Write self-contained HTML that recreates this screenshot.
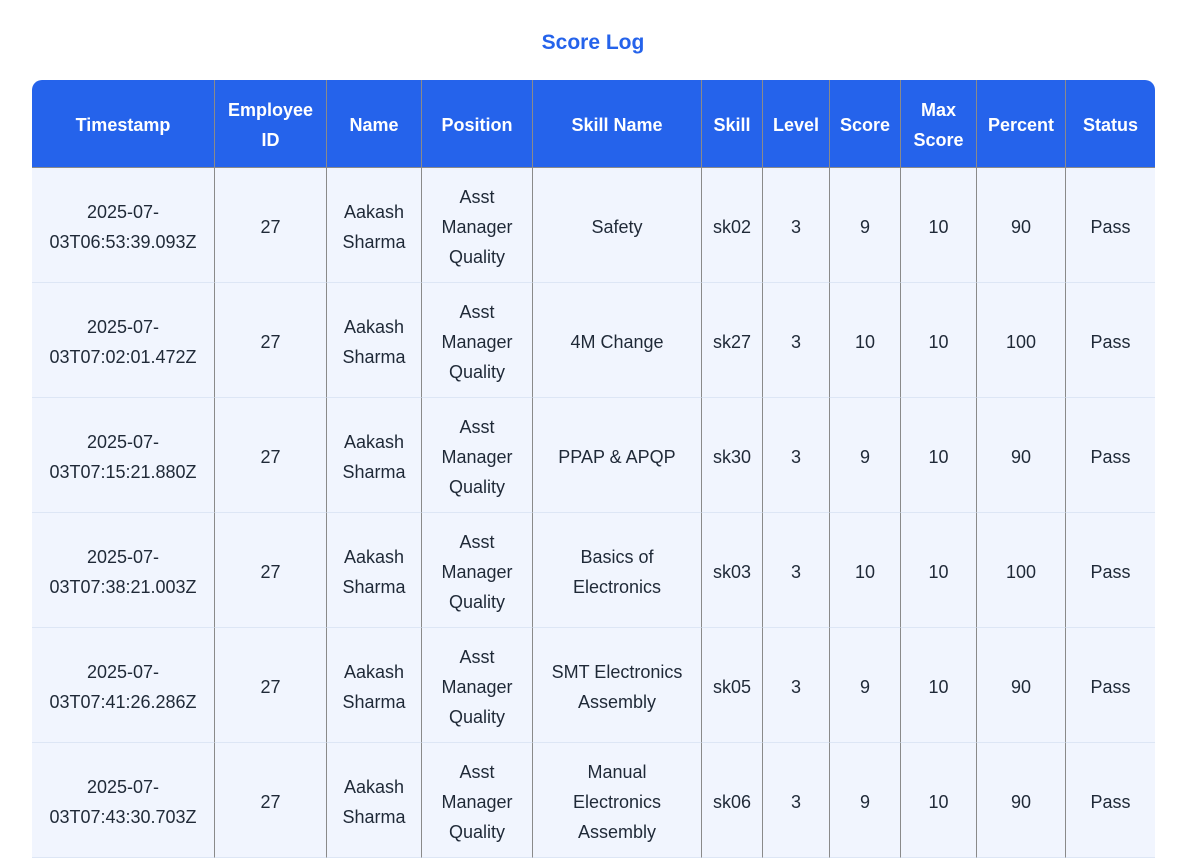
<!DOCTYPE html>
<html><head><meta charset="utf-8"><style>
body{margin:0;background:#fff;font-family:"Liberation Sans",sans-serif;color:#1f2937;width:1180px;height:851px;overflow:hidden}
h1{margin:0;position:absolute;top:31px;left:3px;width:1180px;text-align:center;font-size:21px;color:#2563eb;font-weight:bold}
table{position:absolute;left:32px;top:80px;width:1123px;table-layout:fixed;border-collapse:separate;border-spacing:0;font-size:18px;line-height:30px}
th{background:#2563eb;color:#fff;height:88px;padding:2px 0 0;border-right:1px solid #8a8a8a;border-bottom:1px solid #8a8a8a;font-weight:bold;box-sizing:border-box}
th:first-child{border-top-left-radius:10px}
th:last-child{border-top-right-radius:10px;border-right:none}
td{background:#f1f5fe;height:115px;box-sizing:border-box;text-align:center;padding:4px 4px 0;border-right:1px solid #8a8a8a;border-bottom:1px solid #dde6f5}
td:last-child{border-right:none}
</style></head><body>
<h1>Score Log</h1>
<table>
<colgroup><col style="width:183px"><col style="width:112px"><col style="width:95px"><col style="width:111px"><col style="width:169px"><col style="width:61px"><col style="width:67px"><col style="width:71px"><col style="width:76px"><col style="width:89px"><col style="width:89px"></colgroup>
<tr><th>Timestamp</th><th>Employee<br>ID</th><th>Name</th><th>Position</th><th>Skill Name</th><th>Skill</th><th>Level</th><th>Score</th><th>Max<br>Score</th><th>Percent</th><th>Status</th></tr>
<tr><td>2025-07-<br>03T06:53:39.093Z</td><td>27</td><td>Aakash<br>Sharma</td><td>Asst<br>Manager<br>Quality</td><td>Safety</td><td>sk02</td><td>3</td><td>9</td><td>10</td><td>90</td><td>Pass</td></tr>
<tr><td>2025-07-<br>03T07:02:01.472Z</td><td>27</td><td>Aakash<br>Sharma</td><td>Asst<br>Manager<br>Quality</td><td>4M Change</td><td>sk27</td><td>3</td><td>10</td><td>10</td><td>100</td><td>Pass</td></tr>
<tr><td>2025-07-<br>03T07:15:21.880Z</td><td>27</td><td>Aakash<br>Sharma</td><td>Asst<br>Manager<br>Quality</td><td>PPAP &amp; APQP</td><td>sk30</td><td>3</td><td>9</td><td>10</td><td>90</td><td>Pass</td></tr>
<tr><td>2025-07-<br>03T07:38:21.003Z</td><td>27</td><td>Aakash<br>Sharma</td><td>Asst<br>Manager<br>Quality</td><td>Basics of<br>Electronics</td><td>sk03</td><td>3</td><td>10</td><td>10</td><td>100</td><td>Pass</td></tr>
<tr><td>2025-07-<br>03T07:41:26.286Z</td><td>27</td><td>Aakash<br>Sharma</td><td>Asst<br>Manager<br>Quality</td><td>SMT Electronics<br>Assembly</td><td>sk05</td><td>3</td><td>9</td><td>10</td><td>90</td><td>Pass</td></tr>
<tr><td>2025-07-<br>03T07:43:30.703Z</td><td>27</td><td>Aakash<br>Sharma</td><td>Asst<br>Manager<br>Quality</td><td>Manual<br>Electronics<br>Assembly</td><td>sk06</td><td>3</td><td>9</td><td>10</td><td>90</td><td>Pass</td></tr>
</table>
</body></html>
